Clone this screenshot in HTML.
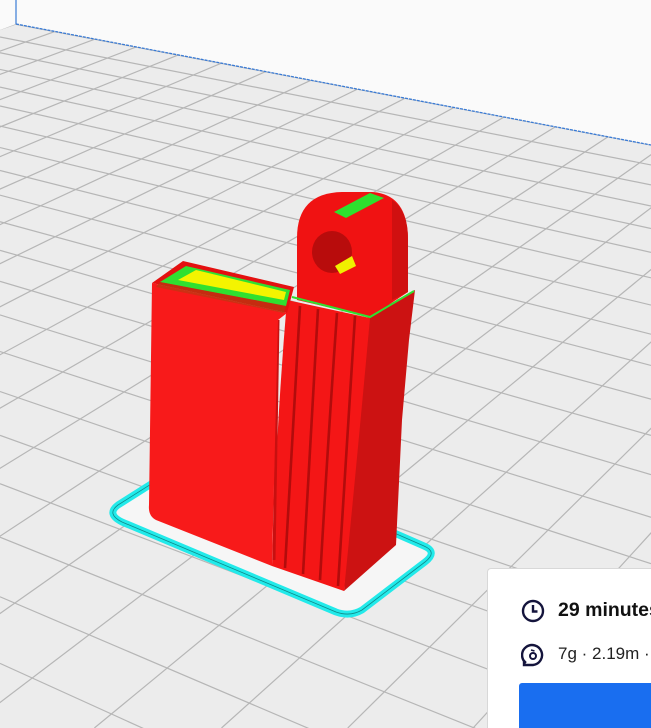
<!DOCTYPE html>
<html><head><meta charset="utf-8"><style>
html,body{margin:0;padding:0;width:651px;height:728px;overflow:hidden;background:#fafafa;font-family:"Liberation Sans","DejaVu Sans",sans-serif;position:relative}
#v{position:absolute;left:0;top:0;overflow:hidden}
.panel{position:absolute;left:487px;top:568px;width:163px;height:159px;background:#fff;border:1px solid #d8d8d8;border-right:none;border-bottom:none;border-radius:4px 0 0 0;overflow:hidden}
.t1{position:absolute;left:70px;top:30px;font-size:19.5px;font-weight:bold;color:#111;white-space:nowrap}
.t2{position:absolute;left:70px;top:75px;font-size:17px;color:#222;white-space:nowrap}
.btn{position:absolute;left:31px;top:114px;width:140px;height:50px;background:#196ef0;border-radius:3px}
</style></head><body>
<svg id="v" width="651" height="728" viewBox="0 0 651 728" xmlns="http://www.w3.org/2000/svg">
<defs><clipPath id="pl"><polygon points="16,24 651,145 651,728 0,728 0,30"/></clipPath></defs>
<polygon points="16,24 651,145 651,728 0,728 0,30" fill="#ececec"/>
<g id="grid" clip-path="url(#pl)" stroke="#b6b6b6" stroke-width="1.2"></g>
<line x1="16" y1="0" x2="16" y2="24" stroke="#3a7bd5" stroke-width="1.2"/>
<line x1="16" y1="24" x2="651" y2="145" stroke="#3a7bd5" stroke-width="1.3" stroke-dasharray="3,1"/>
<path d="M205,450 L118,505 Q106,514 122,522 L336,612 Q350,617 362,610 L425,562 Q438,552 424,546 Z" fill="#f6f6f6" stroke="#22eaea" stroke-width="7" stroke-linejoin="round"/>
<path d="M205,450 L118,505 Q106,514 122,522 L336,612 Q350,617 362,610 L425,562 Q438,552 424,546 Z" fill="none" stroke="#108888" stroke-width="0.8" stroke-linejoin="round"/>
<polygon points="368,316 415,290 409,340 402,420 396,545 344,591 346,560 356,420" fill="#cc1212"/>
<path d="M297,300 L297,238 Q297,193 342,192 L372,192 Q408,194 408,240 L408,292 L370,317 Z" fill="#f01212"/>
<path d="M392,200 Q408,210 408,240 L408,292 L392,300 Z" fill="#d01010"/>
<polygon points="334,212 370,193 384,198 346,218" fill="#2ee02e"/>
<ellipse cx="332" cy="252" rx="20" ry="21" fill="#b80c0c"/>
<polygon points="335,266 352,256 356,266 340,274" fill="#f0f000"/>
<path d="M287,300 L370,318 Q358,450 344,591 L272,566 Q276,430 287,300 Z" fill="#f41616"/>
<g fill="none" stroke="#b20c0c" stroke-width="2.6">
<path d="M300,306 Q292,440 285,568"/>
<path d="M318,309 Q310,440 303,574"/>
<path d="M337,313 Q328,440 320,580"/>
<path d="M355,316 Q346,450 338,586"/>
</g>
<line x1="278" y1="320" x2="274" y2="560" stroke="#c81010" stroke-width="3"/>
<polyline points="292,297 370,317 414,291" fill="none" stroke="#30e030" stroke-width="2"/>
<path d="M152,283 L287,313 L278,320 L272,566 L156,520 Q148,516 149,505 Z" fill="#f81a1a"/>
<polygon points="152,283 183,261 294,287 287,313" fill="#e41010"/>
<polygon points="160,282 186,266 290,290 286,306" fill="#30e030"/>
<polygon points="178,280 196,270 286,292 284,300" fill="#f4f400"/>
<polygon points="156,287 284,313 286,306 160,282" fill="#b04010" opacity="0.6"/>
</svg>
<div class="panel">
<svg style="position:absolute;left:33px;top:30px" width="24" height="24" viewBox="0 0 24 24"><circle cx="12" cy="12" r="10" fill="none" stroke="#14143c" stroke-width="2.4"/><path d="M12,6 V12.5 H16.5" fill="none" stroke="#14143c" stroke-width="2.4"/></svg>
<div class="t1">29 minutes</div>
<svg style="position:absolute;left:33px;top:74px" width="24" height="26" viewBox="0 0 24 26"><path d="M5,20 A10,10 0 1 1 12,22 L3,22 L3,17" fill="none" stroke="#14143c" stroke-width="2.4"/><circle cx="12" cy="13" r="3" fill="none" stroke="#14143c" stroke-width="2"/><path d="M10,7 L13.5,8" stroke="#14143c" stroke-width="1.6"/></svg>
<div class="t2">7g · 2.19m · 0.02</div>
<div class="btn"></div>
</div>
<script>
(function(){
var g=document.getElementById('grid'),NS='http://www.w3.org/2000/svg';
function ln(x1,y1,x2,y2){var l=document.createElementNS(NS,'line');l.setAttribute('x1',x1);l.setAttribute('y1',y1);l.setAttribute('x2',x2);l.setAttribute('y2',y2);g.appendChild(l);}
var A=[-2432,-441],B=[1617,-526],k=5.62e-5;
var ys=[],y=37;while(y>-160){ys.push(y);y-=k*(y+492)*(y+492);}
y=37;while(y<760){y+=k*(y+492)*(y+492);ys.push(y);}
ys.forEach(function(y){var s=(y-A[1])/(0-A[0]);ln(0,y,651,y+651*s);});
var x=16;while(x<1600){var yy=24+0.19*(x-16);var dx=x-B[0],dy=yy-B[1];var t=(728-B[1])/dy;ln(B[0],B[1],B[0]+dx*t,728);x+=41+0.025*(x-91);}
})();
</script>
</body></html>
